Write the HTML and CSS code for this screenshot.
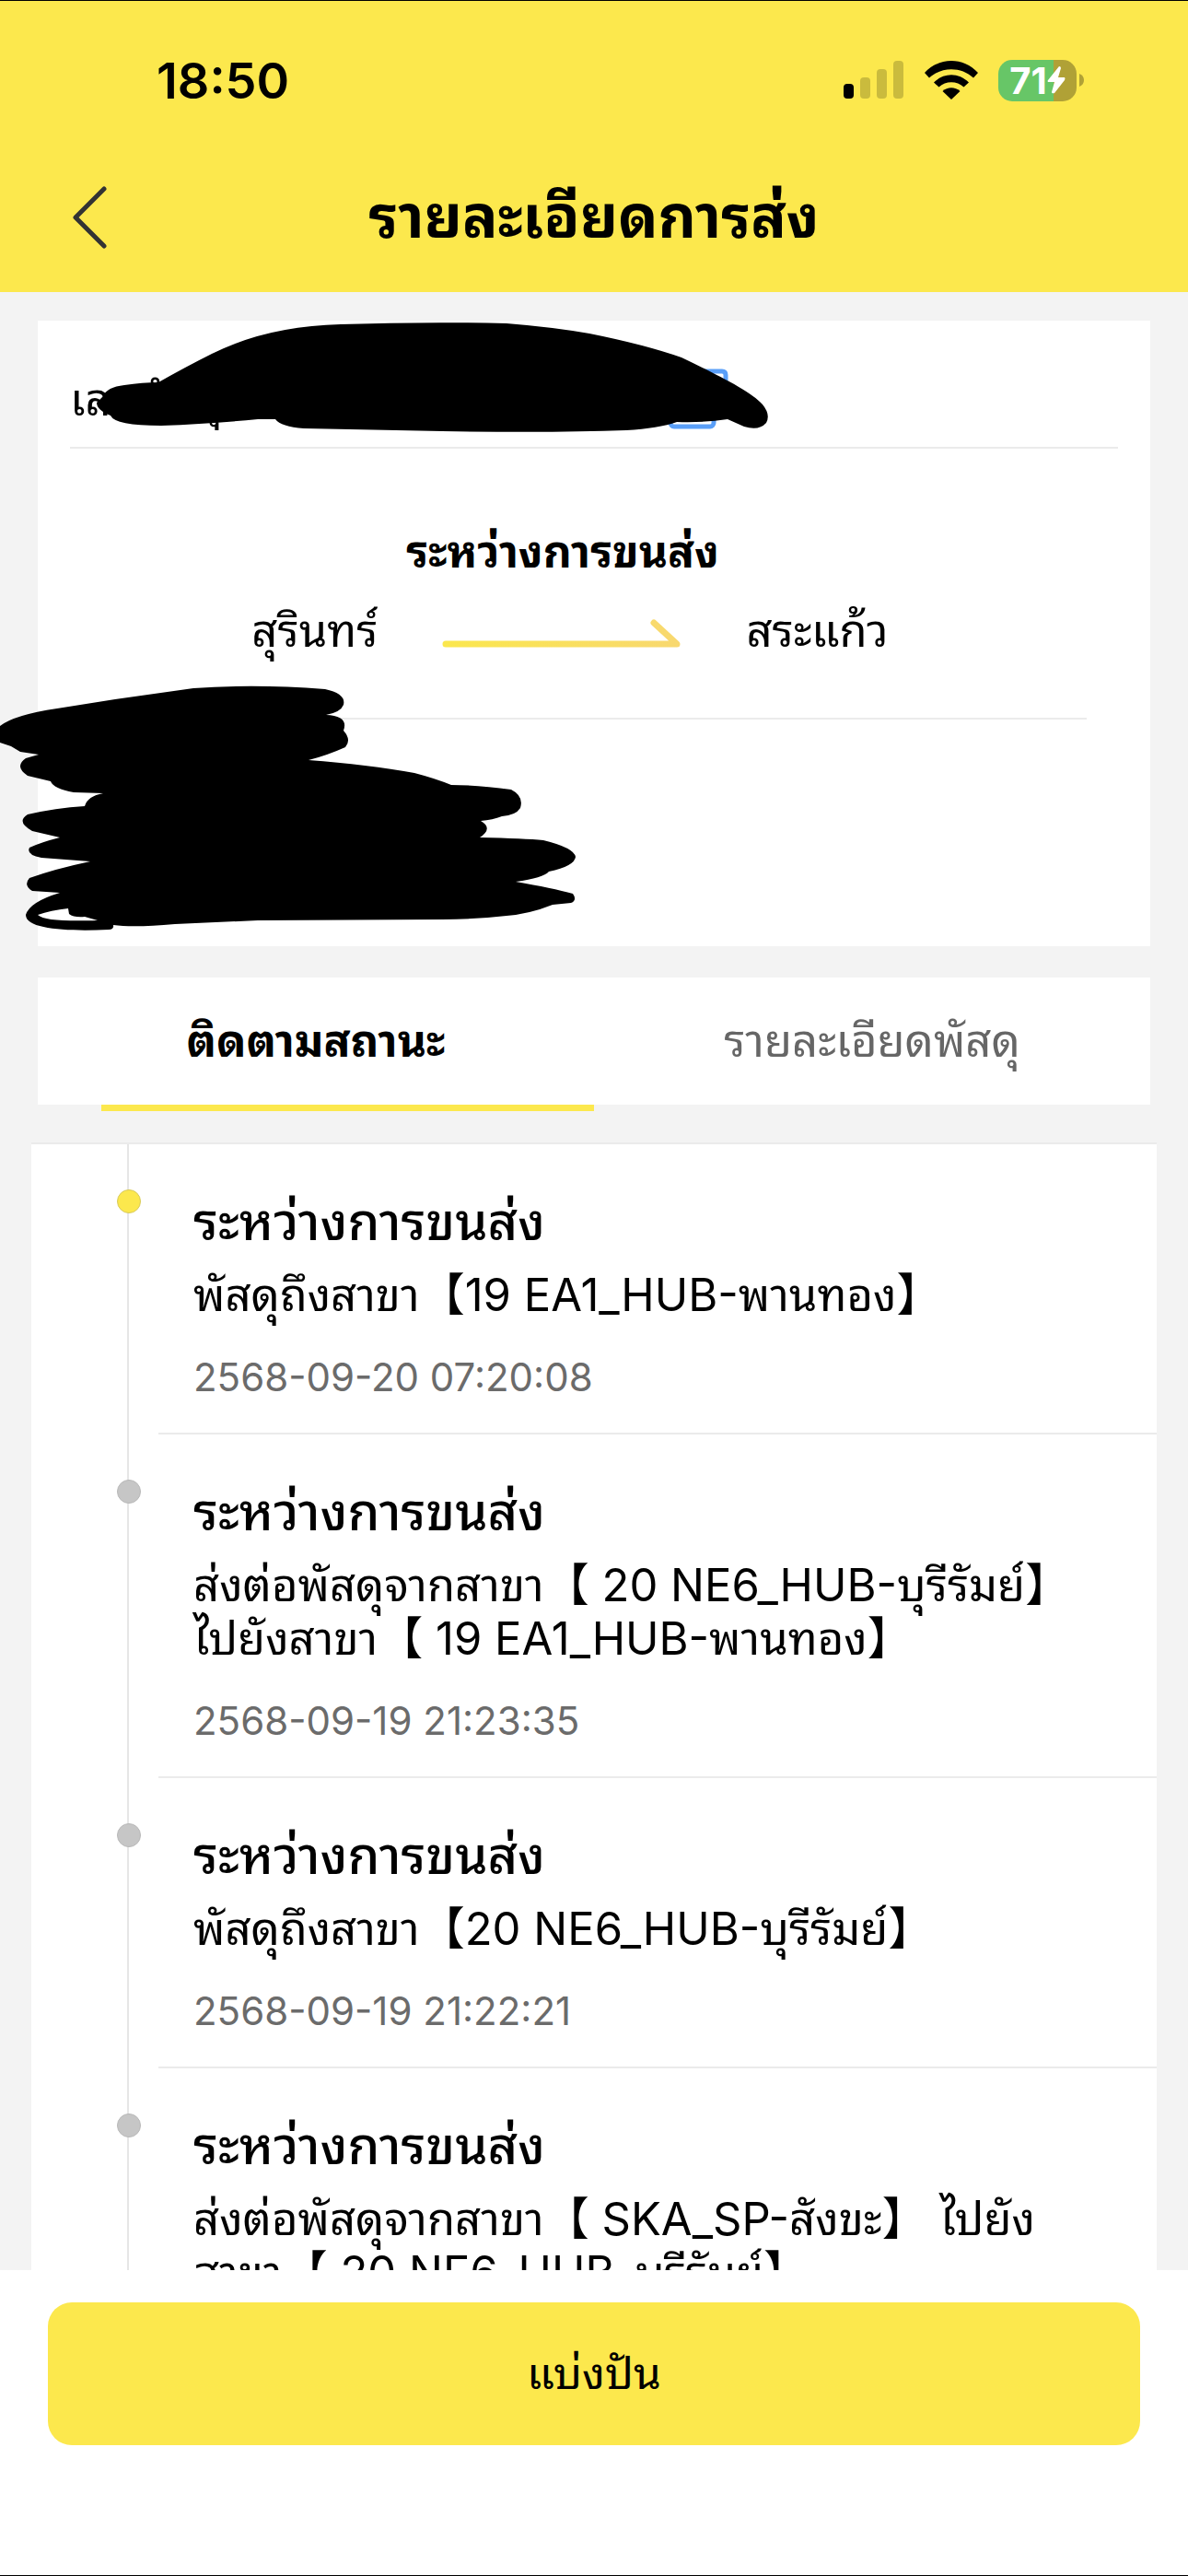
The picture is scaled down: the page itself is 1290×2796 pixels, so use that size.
FILE: index.html
```html
<!DOCTYPE html>
<html lang="th">
<head>
    <meta charset="UTF-8">
    <meta name="viewport" content="width=device-width, initial-scale=1.0">
    <title>รายละเอียดการส่ง</title>
    <link rel="stylesheet" href="styles.css">
</head>
<body>
    <header class="header">
        <div class="status-bar">
            <span class="clock">18:50</span>
            <div class="status-icons">
                <svg width="66" height="42" viewBox="0 0 66 42">
                    <rect x="0" y="25" width="11" height="16" rx="4" fill="#000"/>
                    <rect x="18" y="18" width="11" height="23" rx="4" fill="#cabb3d"/>
                    <rect x="36" y="9" width="11" height="32" rx="4" fill="#cabb3d"/>
                    <rect x="54" y="0" width="11" height="41" rx="4" fill="#cabb3d"/>
                </svg>
                <svg width="58" height="42" viewBox="0 0 58 42">
                    <path d="M0 13 C16 -4.300 42 -4.300 58 13 L53 18.500 C40 6 18 6 5 18.500 Z"/>
                    <path d="M10 23.500 C21 12.500 37 12.500 48 23.500 L42.500 28.500 C35 21.500 23 21.500 15.500 28.500 Z"/>
                    <path d="M19.500 33 C25 28 33 28 38.500 33 L29 42 Z"/>
                </svg>
                <div class="battery">
                    <span class="battery-level">71</span>
                    <svg width="20" height="30" viewBox="0 0 20 30"><path fill="#fff" d="M13 0 Q15 0 15 2 L12 12 H19 Q20 13 19 15 L8 29 Q5 30 5 28 L8 17 H1 Q0 16 1 15 Z"/></svg>
                </div>
                <svg class="battery-cap" width="5" height="14" viewBox="0 0 5 14"><path fill="#b0a136" d="M0 0 Q5 2 5 7 Q5 12 0 14 Z"/></svg>
            </div>
        </div>
        <div class="nav-bar">
            <button class="back" type="button" aria-label="กลับ">
                <svg width="40" height="70" viewBox="0 0 40 70"><path d="M35 4 L4 35 L35 66" fill="none" stroke="#333" stroke-width="5" stroke-linecap="round" stroke-linejoin="round"/></svg>
            </button>
            <h1>รายละเอียดการส่ง</h1>
        </div>
    </header>

    <main class="content">
        <section class="card summary">
            <div class="parcel-number">
                <span>เลขพัสดุ</span>
                <svg class="copy-icon" width="66" height="66" viewBox="0 0 66 66" fill="none" stroke="#5a9ff8" stroke-width="5">
                    <rect x="3" y="16" width="47" height="47" rx="4"/>
                    <path d="M16 3 H59 Q63 3 63 7 V50"/>
                </svg>
            </div>
            <div class="route">
                <h2>ระหว่างการขนส่ง</h2>
                <div class="cities">
                    <span>สุรินทร์</span>
                    <svg width="260" height="40" viewBox="0 0 260 40">
                        <defs>
                            <linearGradient id="arrow" gradientUnits="userSpaceOnUse" x1="0" y1="0" x2="260" y2="0">
                                <stop offset="0" stop-color="#fbe74d"/>
                                <stop offset="1" stop-color="#f8d870"/>
                            </linearGradient>
                        </defs>
                        <path d="M4 34 H255 L230 11" fill="none" stroke="url(#arrow)" stroke-width="7" stroke-linecap="round" stroke-linejoin="round"/>
                    </svg>
                    <span>สระแก้ว</span>
                </div>
            </div>

            <!-- marker strokes over the private details -->
            <svg class="redaction" width="840" height="680" viewBox="0 348 840 680">
                <path d="M105 437 L112 430 Q116 420 135 418 Q155 415 172 415 Q202 398 230 384 Q290 354 370 352 Q460 349 550 351 Q600 355 640 362 Q700 374 740 388 C775 405 815 424 828 439 Q837 450 832 459 Q824 468 808 463 L790 455 Q765 459 735 458 Q715 465 680 467 Q600 470 480 468 L330 465 Q305 463 299 455 L280 455 Q230 460 175 462 Q125 462 120 451 Q105 445 105 437 Z"/>
                <path fill-rule="evenodd" d="M0 788 Q15 776 62 769 L125 759 L210 747 Q277 742 353 748 Q376 753 373 765 Q370 773 354 776 Q379 777 373 793 Q382 803 375 811 Q355 820 335 825 Q400 830 450 839 Q473 845 490 852 Q520 852 555 857 Q569 864 565 877 Q560 885 545 886 Q535 890 522 891 Q536 899 521 909 Q570 910 590 912 Q623 920 625 930 Q624 940 596 946 Q590 953 560 957 Q600 964 622 970 Q627 977 620 980 Q610 981 600 982 Q575 992 550 994 Q515 998 480 998 L280 999 L190 1003 Q145 1007 123 1004 Q124 1009 118 1009 C75 1011 28 1009 28 993 Q32 979 65 969 L35 967 Q25 961 32 953 Q60 943 98 935 L45 931 Q28 928 32 920 Q45 914 65 909 L35 902 Q17 892 30 884 Q60 877 92 875 Q95 864 112 861 L80 860 Q58 856 55 848 L30 842 Q15 832 28 823 L42 819 L22 816 L12 810 L0 806 Z M41 993 Q55 988 74 986 L75 992 Q80 996 92 995 L106 999 C70 1000 47 999 41 993 Z"/>
            </svg>
        </section>

        <nav class="card tabs">
            <a class="tab active" href="#status">ติดตามสถานะ</a>
            <a class="tab" href="#detail">รายละเอียดพัสดุ</a>
        </nav>

        <ul class="timeline" id="status">
            <li class="event current">
                <div class="event-body">
                    <h3>ระหว่างการขนส่ง</h3>
                    <p>พัสดุถึงสาขา【19 EA1_HUB-พานทอง】</p>
                    <time datetime="2025-09-20T07:20:08">2568-09-20 07:20:08</time>
                </div>
            </li>
            <li class="event">
                <div class="event-body">
                    <h3>ระหว่างการขนส่ง</h3>
                    <p>ส่งต่อพัสดุจากสาขา【 20 NE6_HUB-บุรีรัมย์】<br>ไปยังสาขา【 19 EA1_HUB-พานทอง】</p>
                    <time datetime="2025-09-19T21:23:35">2568-09-19 21:23:35</time>
                </div>
            </li>
            <li class="event">
                <div class="event-body">
                    <h3>ระหว่างการขนส่ง</h3>
                    <p>พัสดุถึงสาขา【20 NE6_HUB-บุรีรัมย์】</p>
                    <time datetime="2025-09-19T21:22:21">2568-09-19 21:22:21</time>
                </div>
            </li>
            <li class="event">
                <div class="event-body">
                    <h3>ระหว่างการขนส่ง</h3>
                    <p>ส่งต่อพัสดุจากสาขา【 SKA_SP-สังขะ】 ไปยัง<br>สาขา【 20 NE6_HUB-บุรีรัมย์】</p>
                </div>
            </li>
        </ul>
    </main>

    <footer class="footer">
        <button class="share" type="button">แบ่งปัน</button>
    </footer>
</body>
</html>
```
FILE: styles.css
```css
* {
    box-sizing: border-box;
}
body {
    display: flex;
    flex-direction: column;
    height: 100vh;
    margin: 0;
    border-top: 1px solid #000;
    border-bottom: 1px solid #000;
    background-color: #f3f3f3;
    color: #000;
    font-family: Inter, "Noto Sans Thai Looped", "Noto Looped Thai", Loma, "Noto Sans Thai", "Noto Sans CJK SC", sans-serif;
    font-size: 49px;
}
h1, h2, h3, p, ul {
    margin: 0;
    padding: 0;
}
button {
    border: none;
    font-family: inherit;
    cursor: pointer;
}

/* header */
.header {
    flex: none;
    background-color: #fce84d;
}
.status-bar {
    display: flex;
    align-items: center;
    justify-content: space-between;
    height: 172px;
    padding: 0 113px 0 170px;
}
.clock {
    font-size: 54px;
    font-weight: 600;
}
.status-icons {
    display: flex;
    align-items: center;
    gap: 22px;
}
.battery {
    display: flex;
    align-items: center;
    justify-content: center;
    width: 85px;
    height: 45px;
    border-radius: 15px;
    background: linear-gradient(to right, #67c667 60px, #b0a136 60px);
}
.battery-level {
    color: #fff;
    font-size: 40px;
    font-weight: 700;
}
.battery-cap {
    margin-left: -19px;
}
.nav-bar {
    display: grid;
    grid-template-columns: 120px 1fr 120px;
    align-items: center;
    height: 144px;
}
.back {
    display: flex;
    justify-content: flex-end;
    padding: 0 2px 18px 0;
    background: none;
}
h1 {
    padding-bottom: 20px;
    font-size: 64px;
    line-height: 72px;
    text-align: center;
    white-space: nowrap;
}

/* cards */
.content {
    flex: 1;
    min-height: 0;
    overflow: hidden;
    padding: 31px 34px 0;
}
.card {
    margin: 0 7px;
    background-color: #fff;
}
.summary {
    position: relative;
    height: 679px;
}
.parcel-number {
    display: flex;
    align-items: flex-end;
    height: 139px;
    margin: 0 35px;
    padding-bottom: 18px;
    border-bottom: 2px solid #ebebeb;
    line-height: 66px;
}
.copy-icon {
    position: absolute;
    left: 684px;
    top: 52px;
}
.route {
    height: 294px;
    margin: 0 69px;
    padding-top: 79px;
    border-bottom: 2px solid #ebebeb;
}
h2 {
    padding-right: 68px;
    font-size: 48px;
    line-height: 66px;
    text-align: center;
}
.cities {
    display: flex;
    align-items: center;
    justify-content: center;
    gap: 70px;
    padding: 20px 52px 0 0;
    line-height: 66px;
}
.redaction {
    position: absolute;
    top: 0;
    left: -41px;
}

/* tabs */
.tabs {
    display: flex;
    height: 138px;
    margin-top: 34px;
}
.tab {
    position: relative;
    flex: 1;
    line-height: 138px;
    color: #666;
    text-align: center;
    text-decoration: none;
}
.tab.active {
    color: #000;
    font-size: 48px;
    font-weight: 700;
}
.tab.active::after {
    content: "";
    position: absolute;
    top: 100%;
    right: 0;
    left: 69px;
    height: 7px;
    background-color: #fce84d;
}

/* timeline */
.timeline {
    margin-top: 41px;
    border-top: 2px solid #ebebeb;
    background-color: #fff;
    list-style: none;
}
.event {
    position: relative;
    padding-left: 138px;
}
.event::before {
    content: "";
    position: absolute;
    top: 0;
    bottom: 0;
    left: 104px;
    width: 2px;
    background-color: #e6e6e6;
}
.event::after {
    content: "";
    position: absolute;
    top: 49px;
    left: 93px;
    width: 24px;
    height: 24px;
    border: 1px solid #b8b8b8;
    border-radius: 50%;
    background-color: #c6c6c6;
}
.event.current::after {
    border-color: #d8ca5a;
    background-color: #fce84d;
}
.event-body {
    padding: 48px 60px 22px 38px;
    border-bottom: 2px solid #ebebeb;
}
h3 {
    font-size: 56px;
    font-weight: 500;
    line-height: 72px;
}
.event p {
    padding: 15px 0 22px;
    line-height: 58px;
    white-space: nowrap;
}
time {
    display: block;
    color: #6b6b6b;
    font-size: 42px;
    line-height: 76px;
}

/* footer */
.footer {
    flex: none;
    padding: 35px 52px 141px;
    background-color: #fff;
}
.share {
    display: block;
    width: 100%;
    height: 155px;
    padding-bottom: 12px;
    border-radius: 26px;
    background-color: #fce84d;
    color: #000;
    font-size: 48px;
}
```
